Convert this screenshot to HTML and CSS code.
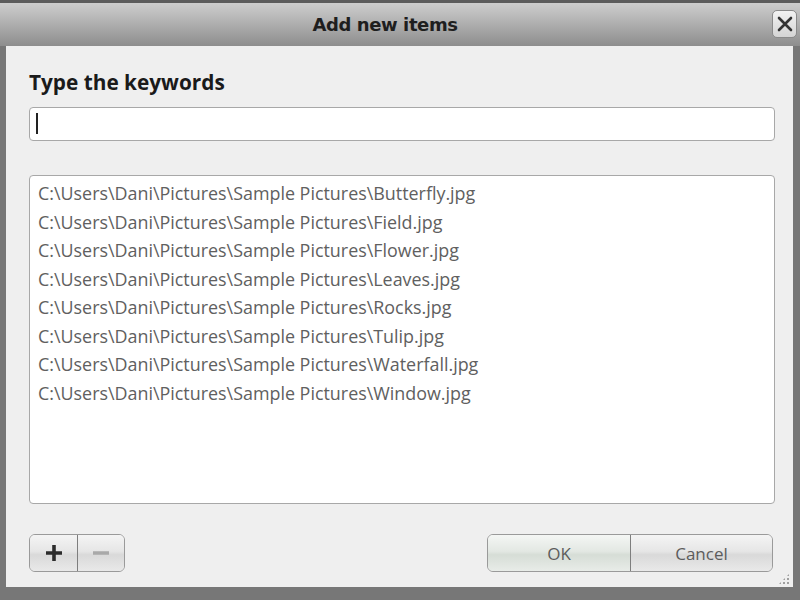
FILE: index.html
```html
<!DOCTYPE html>
<html lang="en">
<head>
  <meta charset="UTF-8" />
  <title>Add new items</title>
  <link rel="stylesheet" href="styles.css">
</head>
<body>
  <div class="window">
    <div class="titlebar">
      <span class="title">Add new items</span>
      <button class="close-btn" aria-label="Close">
        <svg width="18" height="18" viewBox="0 0 18 18"><path d="M3 3 L15 15 M15 3 L3 15" stroke="#333" stroke-width="2.6" stroke-linecap="round"/></svg>
      </button>
    </div>
    <div class="content">
      <h2 class="label">Type the keywords</h2>
      <div class="keyword-input"><span class="caret"></span></div>
      <ul class="file-list">
        <li>C:\Users\Dani\Pictures\Sample Pictures\Butterfly.jpg</li>
        <li>C:\Users\Dani\Pictures\Sample Pictures\Field.jpg</li>
        <li>C:\Users\Dani\Pictures\Sample Pictures\Flower.jpg</li>
        <li>C:\Users\Dani\Pictures\Sample Pictures\Leaves.jpg</li>
        <li>C:\Users\Dani\Pictures\Sample Pictures\Rocks.jpg</li>
        <li>C:\Users\Dani\Pictures\Sample Pictures\Tulip.jpg</li>
        <li>C:\Users\Dani\Pictures\Sample Pictures\Waterfall.jpg</li>
        <li>C:\Users\Dani\Pictures\Sample Pictures\Window.jpg</li>
      </ul>
      <div class="footer">
        <div class="btn-group small">
          <button class="btn plus">
            <svg width="20" height="20" viewBox="0 0 20 20"><path d="M10 2 V18 M2 10 H18" stroke="#2c2c2c" stroke-width="3.6"/></svg>
          </button>
          <button class="btn minus">
            <svg width="20" height="20" viewBox="0 0 20 20"><path d="M2 10 H18" stroke="#a9a9a9" stroke-width="3.6"/></svg>
          </button>
        </div>
        <div class="btn-group wide">
          <button class="btn ok">OK</button>
          <button class="btn cancel">Cancel</button>
        </div>
      </div>
      <div class="grip"></div>
    </div>
  </div>
</body>
</html>
```

FILE: styles.css
```css
* { margin: 0; padding: 0; box-sizing: border-box; }
html, body {
  width: 800px; height: 600px;
  overflow: hidden;
  background: #777;
  font-family: 'Open Sans', 'Noto Sans', sans-serif;
}
.window {
  width: 800px; height: 600px;
  display: flex; flex-direction: column;
  border-top: 3px solid #5c5c5c;
}
.titlebar {
  height: 44px;
  display: flex; align-items: center; justify-content: center;
  position: relative;
  background: linear-gradient(#cdcdcd, #b4b4b4 40%, #8d8d8d);
}
.title {
  font-family: 'DejaVu Sans', sans-serif;
  font-weight: bold;
  font-size: 18px;
  color: #1e1e1e;
  letter-spacing: -0.4px;
  margin-left: -30px;
}
.close-btn {
  position: absolute;
  right: 3px; top: 7px;
  width: 25px; height: 28px;
  border: 1px solid #8a8a8a;
  border-radius: 5px;
  background: linear-gradient(#f2f2f2, #d4d4d4);
  display: flex; align-items: center; justify-content: center;
}
.content {
  flex: 1;
  margin: 0 7px 13px 6px;
  background: #efefef;
  padding: 22px 18px 15px 23px;
  display: flex; flex-direction: column;
  position: relative;
}
.label {
  font-size: 20.8px;
  font-weight: bold;
  color: #1a1a1a;
  line-height: 28px;
  margin-bottom: 11px;
}
.keyword-input {
  height: 34px;
  background: #fff;
  border: 1px solid #a8a8a8;
  border-radius: 4px;
  padding: 5px 6px;
  margin-bottom: 34px;
}
.caret {
  display: block;
  width: 2px; height: 21px;
  background: #222;
}
.file-list {
  list-style: none;
  height: 329px;
  background: #fff;
  border: 1px solid #a8a8a8;
  border-radius: 4px;
  padding: 3px 8px;
}
.file-list li {
  font-size: 17.9px;
  line-height: 28.5px;
  color: #606060;
  white-space: nowrap;
}
.footer {
  margin-top: 30px;
  display: flex; justify-content: space-between; align-items: center;
  padding-right: 2px;
}
.btn-group {
  display: flex;
  border: 1px solid #9a9a9a;
  border-radius: 6px;
  overflow: hidden;
  height: 38px;
}
.btn {
  border: none;
  background: linear-gradient(#f4f4f4, #e6e6e6 45%, #d9d9d9 55%, #e9e9e9);
  display: flex; align-items: center; justify-content: center;
  font-family: 'Open Sans', 'Noto Sans', sans-serif;
  font-size: 17px;
  color: #5c5c5c;
}
.btn + .btn { border-left: 1px solid #7e7e7e; }
.plus { width: 47px; }
.minus { width: 47px; }
.ok { width: 142px; background: linear-gradient(#f4f6f4, #e3e8e3 45%, #d6ddd6 55%, #e8ece8); }
.cancel { width: 142px; }
.grip {
  position: absolute;
  right: 3px; bottom: 2px;
  width: 12px; height: 12px;
  background-image: radial-gradient(circle, #a0a0a0 1px, transparent 1.2px);
  background-size: 4px 4px;
  clip-path: polygon(100% 0, 100% 100%, 0 100%);
}
```
